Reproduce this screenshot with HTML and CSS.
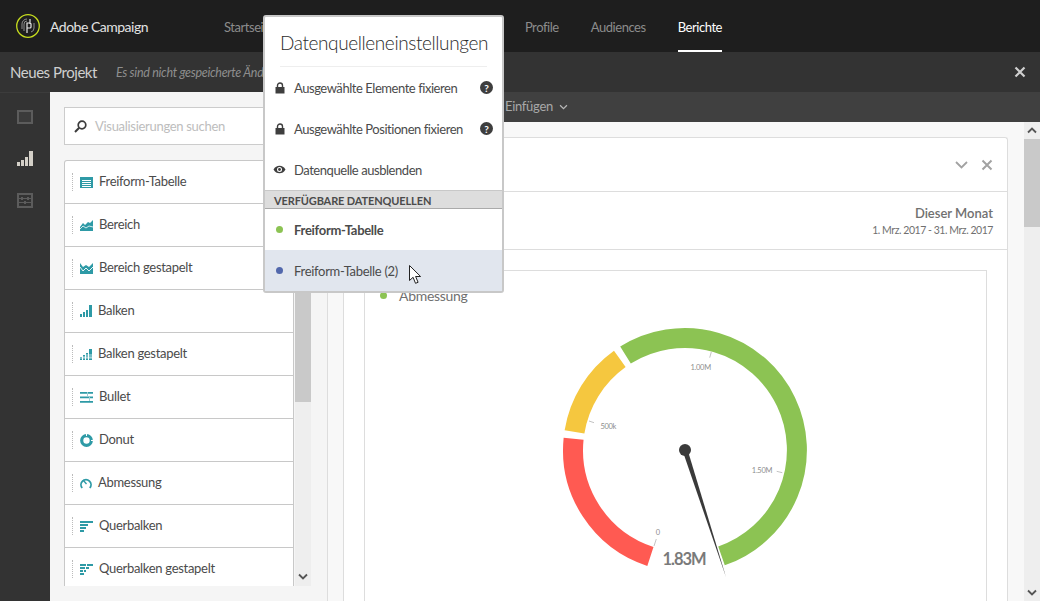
FILE: index.html
```
<!DOCTYPE html>
<html lang="de">
<head>
  <meta charset="UTF-8">
  <meta name="viewport" content="width=device-width, initial-scale=1.0">
  <title>Adobe Campaign</title>
  <link rel="stylesheet" href="styles.css">
</head>
<body>

<div class="app">
  <header class="topbar">
    <svg class="logo" viewBox="0 0 24 24" width="24" height="24">
      <circle cx="12" cy="12" r="11.3" fill="none" stroke="#c6dc1e" stroke-width="1.3"/>
      <path d="M6 15V10a5 5 0 0 1 5-5M8 17V10a3 3 0 0 1 3-3M15 18a4 4 0 0 0 3-4V9" fill="none" stroke="#8d8d8d" stroke-width="1"/>
      <path d="M11 19V9h3a1 1 0 0 1 1 1v3a1 1 0 0 1-1 1h-3M14 5v5" fill="none" stroke="#e6e6e6" stroke-width="1.2"/>
    </svg>
    <span class="brand">Adobe Campaign</span>
    <nav class="nav">
      <a class="nav-start">Startseite</a>
      <a class="nav-profile">Profile</a>
      <a>Audiences</a>
      <a class="active">Berichte</a>
    </nav>
  </header>

  <div class="projectbar">
    <span class="project-name">Neues Projekt</span>
    <span class="project-note">Es sind nicht gespeicherte Änderungen</span>
    <svg class="project-close" viewBox="0 0 12 12" width="12" height="12"><path d="M1.5 1.5l9 9M10.5 1.5l-9 9" stroke="#d0d0d0" stroke-width="2.2"/></svg>
  </div>

  <div class="workspace">
    <aside class="rail">
      <svg viewBox="0 0 16 14" width="16" height="14"><path d="M1 1h14v12H1z" fill="#3b3b3b" stroke="#5c5c5c" stroke-width="2"/></svg>
      <svg viewBox="0 0 16 15" width="16" height="15"><path d="M0 11h3v4H0zM4 9h3v6H4zM8 6h3v9H8zM12 0h4v15h-4z" fill="#d4d0c8"/></svg>
      <svg viewBox="0 0 16 15" width="16" height="15"><path d="M1 1h14v13H1z" fill="none" stroke="#5c5c5c" stroke-width="2"/><path d="M2 5.500h12M2 9.500h12" stroke="#5c5c5c"/><path d="M4 4h2v3H4zM10 4h2v3h-2zM7 8h2v3H7z" fill="#5c5c5c"/></svg>
    </aside>

    <section class="panel">
      <div class="search">
        <svg viewBox="0 0 13 13" width="13" height="13"><circle cx="8" cy="5" r="3.8" fill="none" stroke="#3c3c3c" stroke-width="1.7"/><path d="M5.2 7.800L1 12" stroke="#3c3c3c" stroke-width="2"/></svg>
        <span>Visualisierungen suchen</span>
      </div>
      <div class="picker">
        <ul class="viz-list">
          <li><i class="grip"></i>
            <svg viewBox="0 0 13 11" width="13" height="11"><path d="M0 0h13v11H0z" fill="#2e9aa6"/><path d="M2 3h9v1H2zM2 5h9v1H2zM2 7h9v1H2zM2 9h9v1H2z" fill="#fff"/></svg>
            <span>Freiform-Tabelle</span></li>
          <li><i class="grip"></i>
            <svg viewBox="0 0 13 11" width="13" height="11"><path d="M0 7l3-4 2 2 3-3 2 1 3-3v11H0z" fill="#2e9aa6"/><path d="M0 9l3-3 3 2 3-2 4 1" fill="none" stroke="#fff" stroke-width=".8"/></svg>
            <span>Bereich</span></li>
          <li><i class="grip"></i>
            <svg viewBox="0 0 13 11" width="13" height="11"><path d="M0 0l3 4 3-2 3 2 4-4v11H0z" fill="#2e9aa6"/><path d="M0 4l3 4 3-3 3 3 4-4" fill="none" stroke="#fff" stroke-width=".9"/></svg>
            <span>Bereich gestapelt</span></li>
          <li><i class="grip"></i>
            <svg viewBox="0 0 12 12" width="12" height="12"><path d="M0 9h2v3H0zM3 7h2v5H3zM6 5h2v7H6zM9 0h3v12H9z" fill="#2e9aa6"/></svg>
            <span>Balken</span></li>
          <li><i class="grip"></i>
            <svg viewBox="0 0 12 12" width="12" height="12"><path d="M0 9h2v3H0zM3 7h2v5H3zM6 5h2v7H6zM9 1h3v11H9z" fill="#2e9aa6"/><path d="M0 10h12M3 9h9M6 7h6" stroke="#fff" stroke-width=".7"/></svg>
            <span>Balken gestapelt</span></li>
          <li><i class="grip"></i>
            <svg viewBox="0 0 13 11" width="13" height="11"><path d="M0 0h13v1.800H0zM0 4.500h13v1.800H0zM0 9h13v1.800H0z" fill="#2e9aa6"/><path d="M7 0h1v4H7zM9 5h1v4H9z" fill="#9fcfd5"/></svg>
            <span>Bullet</span></li>
          <li><i class="grip"></i>
            <svg viewBox="0 0 13 13" width="13" height="13"><circle cx="6.500" cy="6.500" r="4.800" fill="none" stroke="#2e9aa6" stroke-width="3.200"/><path d="M6.500 0v2M13 6.500h-2" stroke="#fff"/></svg>
            <span>Donut</span></li>
          <li><i class="grip"></i>
            <svg viewBox="0 0 12 11" width="12" height="11"><path d="M2.200 10A5 5 0 1 1 9.800 10" fill="none" stroke="#2e9aa6" stroke-width="1.800"/><path d="M3 2l3.500 4" stroke="#2e9aa6" stroke-width="1.400"/></svg>
            <span>Abmessung</span></li>
          <li><i class="grip"></i>
            <svg viewBox="0 0 13 11" width="13" height="11"><path d="M0 0h13v2H0zM0 3h8v2H0zM0 6h6v2H0zM0 9h4v2H0z" fill="#2e9aa6"/></svg>
            <span>Querbalken</span></li>
          <li><i class="grip"></i>
            <svg viewBox="0 0 13 11" width="13" height="11"><path d="M0 0h6v2H0zM7 0h6v2H7zM0 3h5v2H0zM6 3h3v2H6zM0 6h3v2H0zM4 6h2v2H4zM0 9h4v2H0z" fill="#2e9aa6"/></svg>
            <span>Querbalken gestapelt</span></li>
        </ul>
        <div class="scrollbar picker-scroll">
          <div class="thumb"></div>
          <svg class="arrow" viewBox="0 0 10 7" width="10" height="7"><path d="M1 1.500l4 4 4-4" fill="none" stroke="#555" stroke-width="1.800"/></svg>
        </div>
      </div>
    </section>

    <main class="main">
      <div class="toolbar">
        <span>Einfügen</span>
        <svg viewBox="0 0 10 7" width="9" height="6"><path d="M1 1.500l4 4 4-4" fill="none" stroke="#b8b8b8" stroke-width="1.400"/></svg>
      </div>
      <div class="canvas">
        <div class="canvas-area">
          <div class="card">
            <div class="card-head">
              <svg viewBox="0 0 13 8" width="13" height="8"><path d="M1 1l5.500 5.500L12 1" fill="none" stroke="#a2a2a2" stroke-width="1.800"/></svg>
              <svg viewBox="0 0 12 12" width="12" height="12"><path d="M1.500 1.500l9 9M10.500 1.500l-9 9" stroke="#a2a2a2" stroke-width="2"/></svg>
            </div>
            <div class="card-range">
              <strong>Dieser Monat</strong>
              <small>1. Mrz. 2017 - 31. Mrz. 2017</small>
            </div>
            <div class="card-body">
              <div class="viz">
                <div class="legend"><i class="dot dot-green"></i>Abmessung</div>
                <svg class="gauge" viewBox="-130 -130 260 260" width="260" height="260">
                  <path d="M-34.600 106.500A112 112 0 0 1 -111.400 -11.300" fill="none" stroke="#ff5a52" stroke-width="20"/>
                  <path d="M-110.500 -18.100A112 112 0 0 1 -65.200 -91.100" fill="none" stroke="#f5c73f" stroke-width="20"/>
                  <path d="M-59.500 -94.900A112 112 0 1 1 36.500 105.900" fill="none" stroke="#8cc353" stroke-width="20"/>
                  <g stroke="#b4b4b4" stroke-width=".8">
                    <path d="M-31 96L-28.700 89M-96 -29L-91 -27.300M26.300 -98L24.700 -92.300M91.700 21.300L97.300 22.700"/>
                  </g>
                  <g class="tick-label" text-anchor="middle">
                    <text x="-27.300" y="85">0</text>
                    <text x="-76.700" y="-21">500k</text>
                    <text x="15.700" y="-80">1.00M</text>
                    <text x="77" y="23">1.50M</text>
                  </g>
                  <text class="gauge-value" x="-1" y="115" text-anchor="middle">1.83M</text>
                  <path d="M2.400 -.8L-2.400 .8L41 127z" fill="#3a3a3a"/>
                  <circle r="6" fill="#3a3a3a"/>
                </svg>
              </div>
            </div>
          </div>
        </div>
        <div class="scrollbar canvas-scroll">
          <svg class="arrow" viewBox="0 0 10 7" width="10" height="7"><path d="M1 5.500l4-4 4 4" fill="none" stroke="#555" stroke-width="1.800"/></svg>
          <div class="thumb"></div>
          <svg class="arrow" viewBox="0 0 10 7" width="10" height="7"><path d="M1 1.500l4 4 4-4" fill="none" stroke="#555" stroke-width="1.800"/></svg>
        </div>
      </div>
    </main>
  </div>

  <div class="popover">
    <h2>Datenquelleneinstellungen</h2>
    <div class="pop-row">
      <svg viewBox="0 0 10 12" width="10" height="12"><path d="M2.500 5V3.500a2.500 2.500 0 0 1 5 0V5" fill="none" stroke="#3e3e3e" stroke-width="1.400"/><path d="M.5 5h9v6.500h-9z" fill="#3e3e3e"/></svg>
      <span>Ausgewählte Elemente fixieren</span>
      <b class="help">?</b>
    </div>
    <div class="pop-row">
      <svg viewBox="0 0 10 12" width="10" height="12"><path d="M2.500 5V3.500a2.500 2.500 0 0 1 5 0V5" fill="none" stroke="#3e3e3e" stroke-width="1.400"/><path d="M.5 5h9v6.500h-9z" fill="#3e3e3e"/></svg>
      <span>Ausgewählte Positionen fixieren</span>
      <b class="help">?</b>
    </div>
    <div class="pop-row">
      <svg class="eye" viewBox="0 0 13 9" width="13" height="9"><path d="M.5 4.500C2 1.800 4 .7 6.500 .7s4.500 1.100 6 3.800c-1.500 2.700-3.500 3.800-6 3.800S2 7.200 .5 4.500z" fill="#3e3e3e"/><circle cx="6.500" cy="4.500" r="2.500" fill="#fff"/><circle cx="6.500" cy="4.500" r="1.400" fill="#3e3e3e"/></svg>
      <span>Datenquelle ausblenden</span>
    </div>
    <div class="pop-section">VERFÜGBARE DATENQUELLEN</div>
    <div class="pop-row pop-source selected"><i class="dot dot-green"></i><span>Freiform-Tabelle</span></div>
    <div class="pop-row pop-source hovered"><i class="dot dot-blue"></i><span>Freiform-Tabelle (2)</span></div>
  </div>

  <svg class="cursor" viewBox="0 0 13 20" width="13" height="20"><path d="M.5 .5v15l3.600-3.200 2.400 6 2.600-1-2.500-5.800h5z" fill="#fff" stroke="#222" stroke-width="1"/></svg>
</div>

</body>
</html>
```

FILE: styles.css
```
* {
  box-sizing: border-box;
}
html, body {
  margin: 0;
  height: 100%;
  overflow: hidden;
}
body {
  font-family: "Lato", "Open Sans", sans-serif;
  font-size: 13px;
  letter-spacing: -0.3px;
  color: #4b4b4b;
}
.app {
  position: relative;
  display: flex;
  flex-direction: column;
  height: 601px;
  overflow: hidden;
}

/* top bars */
.topbar {
  display: flex;
  align-items: center;
  flex: none;
  height: 52px;
  padding-left: 16px;
  background-color: #1e1e1e;
}
.brand {
  margin-left: 10px;
  font-size: 14px;
  letter-spacing: -0.5px;
  color: #e2e2e2;
}
.nav {
  display: flex;
  height: 100%;
  margin-left: 76px;
  gap: 32px;
  align-items: center;
}
.nav a {
  display: flex;
  align-items: center;
  height: 100%;
  padding-top: 4px;
  border-bottom: 2px solid transparent;
  color: #8c8c8c;
  font-size: 13px;
  letter-spacing: -0.45px;
}
.nav .nav-profile {
  margin-left: 219px;
}
.nav .active {
  color: #fff;
  border-bottom-color: #fff;
}
.projectbar {
  display: flex;
  align-items: center;
  flex: none;
  height: 40px;
  padding-left: 10px;
  background-color: #333;
}
.project-name {
  font-size: 15px;
  letter-spacing: -0.45px;
  color: #cfcfcf;
}
.project-note {
  margin-left: 19px;
  font-size: 12.5px;
  font-style: italic;
  letter-spacing: -0.3px;
  color: #8e8e8e;
}
.project-close {
  margin-left: auto;
  margin-right: 14px;
}

/* workspace */
.workspace {
  display: flex;
  flex: 1;
  min-height: 0;
}
.rail {
  display: flex;
  flex-direction: column;
  align-items: center;
  flex: none;
  width: 50px;
  padding-top: 17px;
  gap: 27px;
  background-color: #333;
  border-top: 1px solid #3c3c3c;
}

/* left panel */
.panel {
  display: flex;
  flex-direction: column;
  flex: none;
  width: 278px;
  padding: 15px 16px 15px 14px;
  background-color: #f5f5f5;
  border-right: 1px solid #ddd;
}
.search {
  display: flex;
  align-items: center;
  flex: none;
  height: 38px;
  padding-left: 9px;
  gap: 8px;
  background-color: #fff;
  border: 1px solid #ccc;
  color: #bdbdbd;
}
.picker {
  display: flex;
  flex: 1;
  min-height: 0;
  margin-top: 15px;
}
.viz-list {
  flex: 1;
  margin: 0;
  padding: 0;
  list-style: none;
  overflow: hidden;
  background-color: #fff;
  border: 1px solid #c8c8c8;
  border-bottom: none;
  border-radius: 3px 0 0 0;
}
.viz-list li {
  display: flex;
  align-items: center;
  height: 43px;
  padding-left: 7px;
  gap: 6px;
  border-bottom: 1px solid #c8c8c8;
}
.viz-list li span {
  margin-bottom: 2px;
}
.grip {
  width: 1px;
  height: 18px;
  margin-right: 1px;
  border-left: 1px dotted #bbb;
}
.scrollbar {
  display: flex;
  flex-direction: column;
  align-items: center;
  flex: none;
  width: 16px;
  background-color: #eee;
}
.picker-scroll {
  margin-left: 1px;
  padding-bottom: 6px;
}
.picker-scroll .thumb {
  height: 242px;
}
.thumb {
  align-self: stretch;
  background-color: #c9c9c9;
}
.scrollbar .arrow {
  flex: none;
}
.picker-scroll .arrow,
.canvas-scroll .arrow:last-child {
  margin-top: auto;
}

/* main column */
.main {
  display: flex;
  flex-direction: column;
  flex: 1;
  min-width: 0;
}
.toolbar {
  display: flex;
  align-items: center;
  flex: none;
  height: 30px;
  padding-left: 177px;
  gap: 6px;
  background-color: #404040;
  color: #a8a8a8;
}
.toolbar span {
  margin-bottom: 2px;
}
.canvas {
  display: flex;
  flex: 1;
  min-height: 0;
}
.canvas-area {
  flex: 1;
  padding: 15px 16px 0 15px;
  background-color: #f8f8f8;
  overflow: hidden;
}
.canvas-scroll {
  padding: 5px 0 5px;
}
.canvas-scroll .thumb {
  height: 88px;
  margin-top: 5px;
}
.card {
  height: 100%;
  background-color: #fff;
  border: 1px solid #ddd;
  border-bottom: none;
  border-radius: 3px 3px 0 0;
}
.card-head {
  display: flex;
  align-items: center;
  justify-content: flex-end;
  height: 54px;
  padding-right: 14px;
  gap: 13px;
  border-bottom: 1px solid #ddd;
}
.card-range {
  display: flex;
  flex-direction: column;
  align-items: flex-end;
  justify-content: center;
  height: 58px;
  padding-right: 14px;
  border-bottom: 1px solid #ddd;
  color: #707070;
}
.card-range strong {
  font-size: 13px;
  font-weight: 600;
  letter-spacing: 0;
}
.card-range small {
  margin-top: 3px;
  font-size: 10.5px;
  letter-spacing: -0.45px;
}
.card-body {
  height: 100%;
  padding: 20px 20px 0;
}
.viz {
  height: 100%;
  border: 1px solid #ddd;
}
.legend {
  display: flex;
  align-items: center;
  height: 18px;
  margin-top: 15px;
  padding-left: 15px;
  gap: 12px;
  font-size: 14px;
  color: #707070;
}
.dot {
  flex: none;
  width: 7px;
  height: 7px;
  border-radius: 50%;
}
.dot-green {
  background-color: #8cc353;
}
.dot-blue {
  background-color: #5268ac;
}
.gauge {
  display: block;
  margin: 16px 0 0 189.5px;
}
.tick-label {
  font-size: 7.5px;
  fill: #8e8e8e;
}
.gauge-value {
  font-size: 16.5px;
  font-weight: 700;
  letter-spacing: -1px;
  fill: #7a7a7a;
}

/* data source popover */
.popover {
  position: absolute;
  left: 263px;
  top: 15px;
  width: 241px;
  height: 278px;
  background-color: #fff;
  border: 2px solid #c8c8c8;
  border-radius: 3px;
}
.popover h2 {
  height: 50px;
  margin: 0 15px;
  padding-top: 14px;
  font-size: 19px;
  font-weight: 300;
  letter-spacing: -0.4px;
  line-height: 24px;
  text-align: center;
  color: #2c2c2c;
  white-space: nowrap;
  border-bottom: 1px solid #eee;
}
.pop-row {
  display: flex;
  align-items: center;
  height: 41px;
  padding-left: 10px;
  gap: 9px;
  letter-spacing: -0.45px;
  white-space: nowrap;
}
.pop-row .eye {
  margin-left: -2px;
  margin-right: -1px;
}
.help {
  display: flex;
  align-items: center;
  justify-content: center;
  width: 13px;
  height: 13px;
  margin-left: auto;
  margin-right: 9px;
  border-radius: 50%;
  background-color: #3e3e3e;
  color: #fff;
  font-size: 10px;
  letter-spacing: 0;
}
.pop-section {
  height: 19px;
  padding-left: 9px;
  background-color: #ddd;
  border-top: 1px solid #c8c8c8;
  border-bottom: 1px solid #aaa;
  font-size: 11px;
  font-weight: 700;
  letter-spacing: -0.13px;
  line-height: 19px;
}
.pop-source {
  padding-left: 11px;
  gap: 11px;
  letter-spacing: -0.3px;
}
.selected span {
  font-weight: 700;
}
.hovered {
  background-color: #e1e6ee;
}
.cursor {
  position: absolute;
  left: 409px;
  top: 265px;
}
```
